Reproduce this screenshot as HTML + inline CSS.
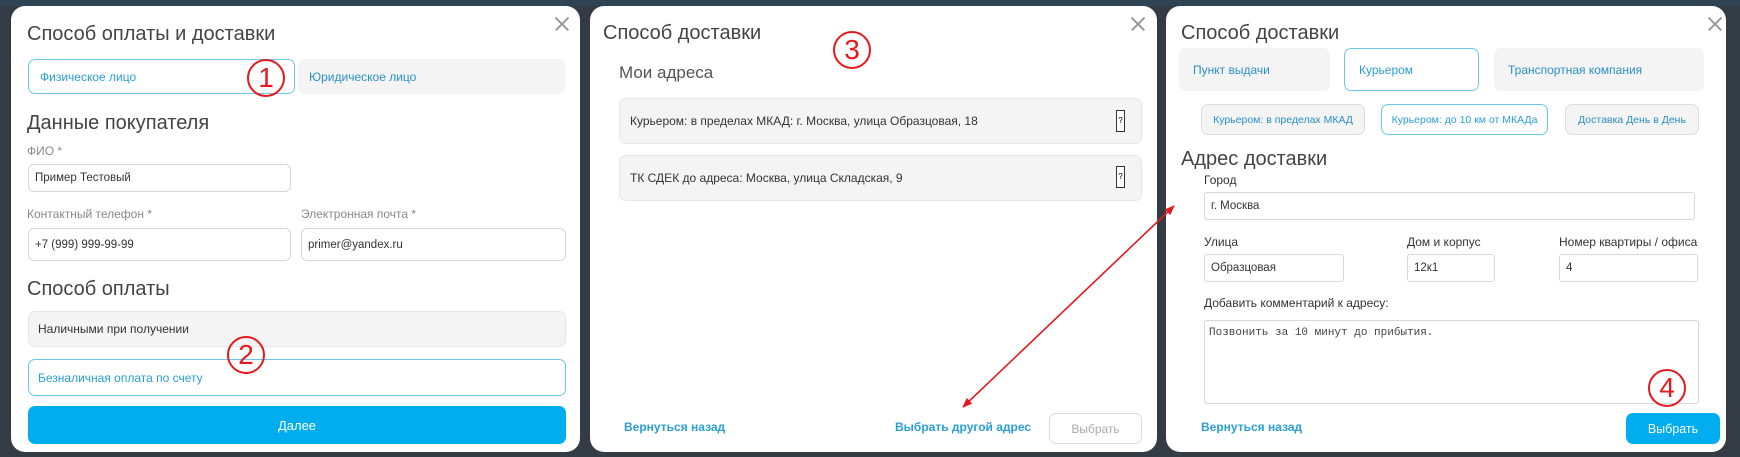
<!DOCTYPE html>
<html><head><meta charset="utf-8"><style>
*{box-sizing:border-box;margin:0;padding:0}
body{width:1740px;height:457px;background:#333c44;position:relative;overflow:hidden;font-family:"Liberation Sans",sans-serif;}
.a{position:absolute}
.panel{position:absolute;background:#fff;border-radius:14px;top:6px;height:446px}
.h{position:absolute;color:#444;font-size:20px;line-height:24px;white-space:nowrap}
.x{position:absolute;width:14px;height:14px}
.x:before,.x:after{content:"";position:absolute;left:-2px;top:6px;width:18px;height:1.6px;background:#999;transform:rotate(45deg)}
.x:after{transform:rotate(-45deg)}
.box{position:absolute;border-radius:7px;font-size:12px;display:flex;align-items:center;white-space:nowrap}
.g{background:#f4f4f4;border:1px solid #e6e6e6;color:#333}
.sel{background:#fff;border:1.5px solid #6cc8ea;color:#2a9fd6}
.gb{background:#f4f4f4;color:#2a8fc6}
.inp{position:absolute;border:1px solid #d8d8d8;border-radius:6px;font-size:11.5px;color:#333;display:flex;align-items:center;padding-left:6px;background:#fff}
.lbl{position:absolute;font-size:12px;color:#888;white-space:nowrap}
.lk{position:absolute;font-size:12px;color:#2a9fd6;font-weight:bold;white-space:nowrap}
.circ{position:absolute;border:2px solid #e5191e;border-radius:50%;color:#e5191e;font-size:28px;display:flex;align-items:center;justify-content:center;line-height:1}
</style></head><body>
<div class="a" style="left:0;top:0;width:1740px;height:6px;background:#2e4354"></div>

<!-- Panel 1 -->
<div class="panel" style="left:11px;width:569px"></div>
<div class="h" style="left:27px;top:22px">Способ оплаты и доставки</div>
<div class="x" style="left:555px;top:17px"></div>
<div class="box sel" style="left:28px;top:59px;width:267px;height:35px;padding-left:11px">Физическое лицо</div>
<div class="box gb" style="left:298px;top:59px;width:267px;height:35px;padding-left:11px">Юридическое лицо</div>
<div class="h" style="left:27px;top:111px">Данные покупателя</div>
<div class="lbl" style="left:27px;top:144px">ФИО *</div>
<div class="inp" style="left:28px;top:164px;width:263px;height:28px">Пример Тестовый</div>
<div class="lbl" style="left:27px;top:207px">Контактный телефон *</div>
<div class="lbl" style="left:301px;top:207px">Электронная почта *</div>
<div class="inp" style="left:28px;top:228px;width:263px;height:33px">+7 (999) 999-99-99</div>
<div class="inp" style="left:301px;top:228px;width:265px;height:33px">primer@yandex.ru</div>
<div class="h" style="left:27px;top:277px">Способ оплаты</div>
<div class="box g" style="left:28px;top:311px;width:538px;height:36px;padding-left:9px">Наличными при получении</div>
<div class="box sel" style="left:28px;top:359px;width:538px;height:37px;padding-left:9px">Безналичная оплата по счету</div>
<div class="box" style="left:28px;top:406px;width:538px;height:38px;background:#00aeef;color:#fff;justify-content:center;font-size:13px">Далее</div>
<div class="circ" style="left:247px;top:59px;width:38px;height:38px">1</div>
<div class="circ" style="left:227px;top:336px;width:38px;height:38px">2</div>

<!-- Panel 2 -->
<div class="panel" style="left:590px;width:567px"></div>
<div class="h" style="left:603px;top:21px">Способ доставки</div>
<div class="x" style="left:1131px;top:17px"></div>
<div class="circ" style="left:833px;top:31px;width:38px;height:38px">3</div>
<div class="a" style="left:619px;top:63px;font-size:17px;color:#555">Мои адреса</div>
<div class="box g" style="left:619px;top:98px;width:523px;height:46px;padding-left:10px">Курьером: в пределах МКАД: г. Москва, улица Образцовая, 18</div>
<div class="box g" style="left:619px;top:155px;width:523px;height:46px;padding-left:10px">ТК СДЕК до адреса: Москва, улица Складская, 9</div>
<div class="a" style="left:1116px;top:110px;width:9px;height:22px;border:1px solid #333;font-size:8px;text-align:center;line-height:20px;background:#fff">?</div>
<div class="a" style="left:1116px;top:166px;width:9px;height:22px;border:1px solid #333;font-size:8px;text-align:center;line-height:20px;background:#fff">?</div>
<div class="lk" style="left:624px;top:420px">Вернуться назад</div>
<div class="lk" style="left:895px;top:420px">Выбрать другой адрес</div>
<div class="box" style="left:1049px;top:413px;width:93px;height:31px;border:1px solid #ddd;color:#aaa;justify-content:center;font-size:12px">Выбрать</div>

<!-- Panel 3 -->
<div class="panel" style="left:1166px;width:560px"></div>
<div class="h" style="left:1181px;top:21px">Способ доставки</div>
<div class="x" style="left:1708px;top:17px"></div>
<div class="box gb" style="left:1179px;top:48px;width:151px;height:43px;padding-left:14px">Пункт выдачи</div>
<div class="box sel" style="left:1344px;top:48px;width:135px;height:43px;padding-left:14px">Курьером</div>
<div class="box gb" style="left:1494px;top:48px;width:210px;height:43px;padding-left:14px">Транспортная компания</div>
<div class="box" style="left:1201px;top:104px;width:164px;height:31px;background:#f4f4f4;border:1px solid #ddd;color:#2a8fc6;justify-content:center;font-size:10.5px">Курьером: в пределах МКАД</div>
<div class="box sel" style="left:1381px;top:104px;width:167px;height:31px;justify-content:center;font-size:10.5px">Курьером: до 10 км от МКАДа</div>
<div class="box" style="left:1565px;top:104px;width:134px;height:31px;background:#f4f4f4;border:1px solid #ddd;color:#2a8fc6;justify-content:center;font-size:10.5px">Доставка День в День</div>
<div class="h" style="left:1181px;top:147px">Адрес доставки</div>
<div class="lbl" style="left:1204px;top:173px;color:#333">Город</div>
<div class="inp" style="left:1204px;top:192px;width:491px;height:28px;border-radius:3px">г. Москва</div>
<div class="lbl" style="left:1204px;top:235px;color:#333">Улица</div>
<div class="lbl" style="left:1407px;top:235px;color:#333">Дом и корпус</div>
<div class="lbl" style="left:1559px;top:235px;color:#333">Номер квартиры / офиса</div>
<div class="inp" style="left:1204px;top:254px;width:140px;height:28px;border-radius:3px">Образцовая</div>
<div class="inp" style="left:1407px;top:254px;width:88px;height:28px;border-radius:3px">12к1</div>
<div class="inp" style="left:1559px;top:254px;width:139px;height:28px;border-radius:3px">4</div>
<div class="lbl" style="left:1204px;top:296px;color:#333">Добавить комментарий к адресу:</div>
<div class="a" style="left:1204px;top:320px;width:495px;height:84px;border:1px solid #d8d8d8;border-radius:3px;font-family:'Liberation Mono',monospace;font-size:11px;color:#444;padding:6px 4px">Позвонить за 10 минут до прибытия.</div>
<div class="lk" style="left:1201px;top:420px">Вернуться назад</div>
<div class="box" style="left:1626px;top:413px;width:94px;height:31px;background:#00aeef;color:#fff;justify-content:center;font-size:12.5px">Выбрать</div>
<div class="circ" style="left:1648px;top:369px;width:38px;height:38px">4</div>

<svg class="a" style="left:0;top:0" width="1740" height="457">
<defs><marker id="m" markerWidth="10" markerHeight="8" refX="9" refY="4" orient="auto-start-reverse" markerUnits="userSpaceOnUse"><path d="M0,0L10,4L0,8z" fill="#e5191e"/></marker></defs>
<line x1="1174" y1="206" x2="963" y2="407" stroke="#e5191e" stroke-width="1.6" marker-start="url(#m)" marker-end="url(#m)"/>
</svg>
</body></html>
